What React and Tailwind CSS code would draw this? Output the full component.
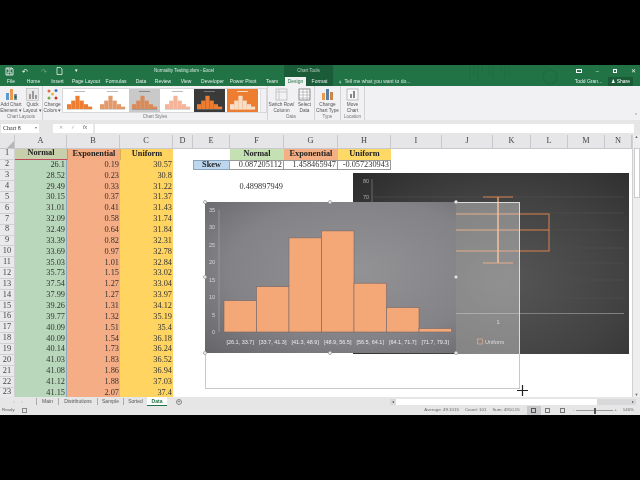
import React from 'react';

const normal = [26.1, 28.52, 29.49, 30.15, 31.01, 32.09, 32.49, 33.39, 33.69, 35.03, 35.73, 37.54, 37.99, 39.26, 39.77, 40.09, 40.09, 40.14, 41.03, 41.08, 41.12, 41.15];
const expo = [0.19, 0.23, 0.33, 0.37, 0.41, 0.58, 0.64, 0.82, 0.97, 1.01, 1.15, 1.27, 1.27, 1.31, 1.32, 1.51, 1.54, 1.73, 1.83, 1.86, 1.88, 2.07];
const uniform = [30.57, 30.8, 31.22, 31.37, 31.43, 31.74, 31.84, 32.31, 32.78, 32.84, 33.02, 33.04, 33.97, 34.12, 35.19, 35.4, 36.18, 36.24, 36.52, 36.94, 37.03, 37.4];

const colLetters = ['A', 'B', 'C', 'D', 'E', 'F', 'G', 'H', 'I', 'J', 'K', 'L', 'M', 'N'];

const tabs = [
  ['File', 'w-[22px]'],
  ['Home', 'w-[23px]'],
  ['Insert', 'w-[25px]'],
  ['Page Layout', 'w-[32px]'],
  ['Formulas', 'w-[28px]'],
  ['Data', 'w-[22px]'],
  ['Review', 'w-[22px]'],
  ['View', 'w-[24px]'],
  ['Developer', 'w-[29px]'],
  ['Power Pivot', 'w-[32px]'],
  ['Team', 'w-[26px]'],
];

const sheetTabs = [
  ['Main', 'w-[22px]'],
  ['Distributions', 'w-[39px]'],
  ['Sample', 'w-[26px]'],
  ['Sorted', 'w-[24px]'],
];

const bars = [9, 13, 27, 29, 14, 7, 1];
const binLabels = ['[26.1, 33.7]', '[33.7, 41.3]', '[41.3, 48.9]', '[48.9, 56.5]', '[56.5, 64.1]', '[64.1, 71.7]', '[71.7, 79.3]'];

const StyleThumb = ({ bg, bar, line = '#bbb' }) => (
  <svg width="31" height="23" viewBox="0 0 31 23" className="shrink-0">
    <rect width="31" height="23" fill={bg} />
    <rect x="10" y="2" width="11" height="1" fill={line} />
    {[4, 7, 11, 7, 4, 2].map((h, i) => (
      <rect key={i} x={3 + i * 4.2} y={20 - h * 1.2} width="4.2" height={h * 1.2} fill={bar} />
    ))}
    <rect x="3" y="20" width="25" height="0.6" fill={line} />
  </svg>
);

const RibbonBtn = ({ w, lines, children }) => (
  <div className={`${w} shrink-0 flex flex-col items-center text-[4.7px] leading-[6px] text-[#555]`}>
    <div className="h-[14px] mt-[1px] mb-[1px] flex items-center justify-center">{children}</div>
    {lines.map((l) => (
      <span key={l} className="whitespace-nowrap">{l}</span>
    ))}
  </div>
);

const RibbonGroup = ({ w, label, children }) => (
  <div className={`${w} h-full border-r border-[#d4d3d6] flex flex-col`}>
    <div className="flex-1 flex justify-center">{children}</div>
    <div className="text-center text-[4.5px] leading-[6px] text-[#777]">{label}</div>
  </div>
);

const Handle = ({ pos }) => (
  <div className={`absolute w-[4px] h-[4px] rounded-full bg-white border border-[#aaa] ${pos}`}></div>
);

const Cell = ({ className = '', children }) => (
  <div className={`h-full flex items-center justify-end pr-[1px] overflow-hidden whitespace-nowrap ${className}`}>
    {children}
  </div>
);

const HeadCell = ({ className = '', children }) => (
  <div className={`h-full flex items-center justify-center font-bold text-[#222] ${className}`}>{children}</div>
);

const Row = ({ n }) => {
  const i = n - 2;
  const num = (
    <div className="h-full bg-[#e9e9ec] border-r border-b border-[#d0d0d4] flex items-center justify-center text-[#444]">{n}</div>
  );
  if (n === 1) {
    return (
      <>
        {num}
        <HeadCell className="bg-[#c7d0ab] border-b border-[#c0485a]">Normal</HeadCell>
        <HeadCell className="bg-[#f4ab82] border-l border-[#c9926f]">Exponential</HeadCell>
        <HeadCell className="bg-[#ffd35f] border-l border-[#d9b04f]">Uniform</HeadCell>
        <div></div>
        <div></div>
        <HeadCell className="bg-[#c5e0b3]">Normal</HeadCell>
        <HeadCell className="bg-[#f4b084]">Exponential</HeadCell>
        <HeadCell className="bg-[#ffd966]">Uniform</HeadCell>
      </>
    );
  }
  return (
    <>
      {num}
      <Cell className="bg-[#b9d7ba] border-r border-[#8fa9c4]">{normal[i]}</Cell>
      <Cell className="bg-[#f4ad84]">{expo[i]}</Cell>
      <Cell className="bg-[#ffd460]">{uniform[i]}</Cell>
      <div></div>
      {n === 2 ? (
        <>
          <div className="h-full bg-[#bdd7ee] border border-[#8aa4bd] flex items-center justify-center font-bold text-[#222]">Skew</div>
          <Cell className="border-y border-r border-[#999]">0.087205112</Cell>
          <Cell className="border-y border-r border-[#999]">1.458465947</Cell>
          <Cell className="border-y border-r border-[#999]">-0.057230943</Cell>
        </>
      ) : n === 4 ? (
        <>
          <div></div>
          <Cell>0.489897949</Cell>
        </>
      ) : null}
    </>
  );
};

const HistogramChart = () => (
  <svg width="251" height="151" viewBox="0 0 251 151" className="block">
    <line x1="14" y1="8" x2="14" y2="130" stroke="#a5a5a8" strokeWidth="0.7" />
    {[35, 30, 25, 20, 15, 10, 5, 0].map((v) => (
      <text key={v} x="10" y={130 - v * 3.486 + 2} textAnchor="end" fontSize="5.5" fill="#d5d5d5" fontFamily="Liberation Sans, sans-serif">{v}</text>
    ))}
    {bars.map((v, i) => (
      <rect key={i} x={19 + i * 32.5} y={130 - v * 3.486} width="32.5" height={v * 3.486} fill="#f4a878" stroke="#75686a" strokeWidth="0.6" />
    ))}
    {binLabels.map((l, i) => (
      <text key={l} x={35.2 + i * 32.5} y="142" textAnchor="middle" fontSize="5.5" fill="#ecebeb" fontFamily="Liberation Sans, sans-serif">{l}</text>
    ))}
  </svg>
);

const BoxChart = () => (
  <svg width="276" height="181" viewBox="0 0 276 181" className="block">
    <text x="16" y="10" textAnchor="end" fontSize="5.5" fill="#aaa" fontFamily="Liberation Sans, sans-serif">80</text>
    <text x="16" y="26" textAnchor="end" fontSize="5.5" fill="#aaa" fontFamily="Liberation Sans, sans-serif">70</text>
    <line x1="19" y1="6" x2="19" y2="30" stroke="#777" strokeWidth="0.8" />
    {[24, 40, 57, 75, 90, 107, 125].map((y) => (
      <line key={y} x1="20" y1={y} x2="271" y2={y} stroke="#505050" strokeWidth="0.6" />
    ))}
    <line x1="20" y1="140.5" x2="271" y2="140.5" stroke="#808080" strokeWidth="1" />
    <rect x="85" y="41" width="111" height="37" fill="none" stroke="#d9824e" strokeWidth="1" />
    <line x1="85" y1="57" x2="196" y2="57" stroke="#d9824e" strokeWidth="1" />
    <line x1="145" y1="24" x2="145" y2="90" stroke="#e89a68" strokeWidth="1.6" />
    <line x1="130" y1="24" x2="160" y2="24" stroke="#d9824e" strokeWidth="1" />
    <line x1="130" y1="90" x2="160" y2="90" stroke="#d9824e" strokeWidth="1" />
    <text x="145" y="151" textAnchor="middle" fontSize="5.5" fill="#ccc" fontFamily="Liberation Sans, sans-serif">1</text>
    <rect x="124.5" y="166" width="5" height="5" fill="none" stroke="#d9824e" strokeWidth="0.7" />
    <text x="132" y="171" fontSize="5.5" fill="#ccc" fontFamily="Liberation Sans, sans-serif">Uniform</text>
  </svg>
);

export default function App() {
  return (
    <div className="w-[640px] h-[480px] bg-black flex flex-col overflow-hidden font-['Liberation_Sans',sans-serif]">
      <div className="h-[65px] shrink-0"></div>

      <div className="h-[350px] shrink-0 flex flex-col bg-[#e6e6e6] blur-[0.4px]">
        {/* Title bar and tabs */}
        <div className="h-[21px] shrink-0 bg-[#217346] relative text-white">
          {/* faint circuit pattern behind the window buttons */}
          <svg width="130" height="21" viewBox="0 0 130 21" className="absolute left-[465px] top-0 opacity-20">
            <path d="M5 0v14M9 0v10M13 0v16M17 0v8M24 0v12M28 0v15M36 0v9M40 0v14M44 0v11" stroke="#0f5a32" strokeWidth="1.5" />
            <circle cx="85" cy="12" r="7" fill="none" stroke="#0f5a32" strokeWidth="2" />
          </svg>
          <div className="h-[12px] flex items-center text-[4.5px] relative">
            <svg width="9" height="9" viewBox="0 0 9 9" className="ml-[5px]">
              <path d="M1 1h6l1 1v6H1z M3 1v2h3V1 M3 8V5h3v3" fill="none" stroke="#fff" strokeWidth="0.8" />
            </svg>
            <span className="ml-[8px] text-[7px] leading-none">↶</span>
            <span className="ml-[13px] text-[7px] leading-none text-[#6fa58a]">↷</span>
            <svg width="7" height="8" viewBox="0 0 7 8" className="ml-[9px]">
              <path d="M1 .5h3.5L6 2v5.5H1z" fill="none" stroke="#fff" strokeWidth="0.7" />
            </svg>
            <span className="ml-[12px] text-[5px]">▾</span>
            <span className="ml-[76px] w-[60px] text-center whitespace-nowrap text-[#d8e8df]">Normality Testing.xlsm - Excel</span>
            <div className="absolute left-[284px] top-0 w-[49px] h-[12px] bg-[#1b5c38] flex items-center justify-center text-[#b9cfc3]">Chart Tools</div>
            <div className="ml-auto mr-[4px] flex items-center gap-[14px] text-[6px] text-[#e6f0ea]">
              <span className="w-[6px] h-[4px] border border-white"></span>
              <span>–</span>
              <span className="w-[4px] h-[4px] border border-white"></span>
              <span>✕</span>
            </div>
          </div>
          <div className="h-[9px] flex items-center text-[5px] leading-none relative">
            {tabs.map(([label, w]) => (
              <div key={label} className={`${w} text-center whitespace-nowrap text-[#e4efe9]`}>{label}</div>
            ))}
            <div className="w-[21px] h-full bg-[#f1f0f2] text-[#217346] flex items-center justify-center">Design</div>
            <div className="w-[27px] h-full bg-[#1b5c38] flex items-center justify-center text-[#e4efe9]">Format</div>
            <span className="ml-[5px] text-[6px]">♀</span>
            <span className="ml-[2px] whitespace-nowrap text-[#d8e8df]">Tell me what you want to do...</span>
            <span className="ml-auto whitespace-nowrap text-[#e4efe9]">Todd Gran...</span>
            <span className="ml-[6px] mr-[7px] px-[3px] h-full flex items-center bg-[#1b5c38] whitespace-nowrap">♟ Share</span>
          </div>
        </div>

        {/* Ribbon */}
        <div className="h-[34px] shrink-0 bg-[#f1f0f2] flex">
          <RibbonGroup w="w-[43px]" label="Chart Layouts">
            <RibbonBtn w="w-[23px]" lines={['Add Chart', 'Element ▾']}>
              <svg width="13" height="13" viewBox="0 0 13 13">
                <rect x="1" y="5" width="3" height="7" fill="#5b9bd5" />
                <rect x="5" y="1" width="3" height="11" fill="#ed9a4a" />
                <rect x="9" y="6" width="3" height="6" fill="#7f8ea3" />
                <path d="M9 9h3M10.500 7.500v3" stroke="#217346" strokeWidth="1" />
              </svg>
            </RibbonBtn>
            <RibbonBtn w="w-[20px]" lines={['Quick', 'Layout ▾']}>
              <svg width="13" height="13" viewBox="0 0 13 13">
                <rect x="0.500" y="0.500" width="12" height="12" fill="#e8e8ea" stroke="#aaa" strokeWidth="0.5" />
                <rect x="3" y="6" width="2" height="5" fill="#999" />
                <rect x="6" y="3" width="2" height="8" fill="#999" />
                <rect x="9" y="7" width="2" height="4" fill="#999" />
              </svg>
            </RibbonBtn>
          </RibbonGroup>
          <RibbonGroup w="w-[225px]" label="Chart Styles">
            <div className="flex w-full">
              <RibbonBtn w="w-[19px]" lines={['Change', 'Colors ▾']}>
                <svg width="13" height="13" viewBox="0 0 13 13">
                  <circle cx="3" cy="3" r="1.500" fill="#e66b3a" />
                  <circle cx="10" cy="2.500" r="1.500" fill="#4472c4" />
                  <circle cx="6.500" cy="6" r="1.500" fill="#f2b233" />
                  <circle cx="3" cy="10" r="1.500" fill="#70ad47" />
                  <circle cx="10" cy="10" r="1.500" fill="#c0392b" />
                </svg>
              </RibbonBtn>
              <div className="w-[205px] h-[25px] mt-[2px] bg-white border border-[#d8d8da] flex items-center gap-[1.5px] pl-[1px]">
                <StyleThumb bg="#ffffff" bar="#ed7d31" />
                <StyleThumb bg="#ffffff" bar="#e39a6b" />
                <StyleThumb bg="#c9c9c9" bar="#d98a58" line="#888" />
                <StyleThumb bg="#ffffff" bar="#f5b49a" />
                <StyleThumb bg="#3a3a3a" bar="#ed7d31" line="#777" />
                <StyleThumb bg="#ed7d31" bar="#f6dfc9" line="#f6dfc9" />
                <div className="ml-auto w-[6px] h-full bg-[#f1f0f2] border-l border-[#ddd]"></div>
              </div>
            </div>
          </RibbonGroup>
          <RibbonGroup w="w-[47px]" label="Data">
            <RibbonBtn w="w-[27px]" lines={['Switch Row/', 'Column']}>
              <svg width="13" height="13" viewBox="0 0 13 13">
                <rect x="1" y="1" width="11" height="11" fill="#f1f0f2" stroke="#bbb" strokeWidth="0.8" />
                <path d="M1 4h11M4 1v11" stroke="#bbb" strokeWidth="0.7" />
              </svg>
            </RibbonBtn>
            <RibbonBtn w="w-[19px]" lines={['Select', 'Data']}>
              <svg width="13" height="13" viewBox="0 0 13 13">
                <rect x="1" y="1" width="11" height="11" fill="#fff" stroke="#777" strokeWidth="0.8" />
                <path d="M1 4h11M1 7h11M1 10h11M5 1v11M9 1v11" stroke="#888" strokeWidth="0.5" />
              </svg>
            </RibbonBtn>
          </RibbonGroup>
          <RibbonGroup w="w-[26px]" label="Type">
            <RibbonBtn w="w-[25px]" lines={['Change', 'Chart Type']}>
              <svg width="13" height="13" viewBox="0 0 13 13">
                <rect x="1" y="5" width="3" height="7" fill="#ed9a4a" />
                <rect x="5" y="1" width="3" height="11" fill="#5b7fa5" />
                <rect x="9" y="4" width="3" height="8" fill="#c8864a" />
              </svg>
            </RibbonBtn>
          </RibbonGroup>
          <RibbonGroup w="w-[24px]" label="Location">
            <RibbonBtn w="w-[23px]" lines={['Move', 'Chart']}>
              <svg width="13" height="13" viewBox="0 0 13 13">
                <rect x="1" y="1" width="11" height="11" fill="#f7f7f7" stroke="#999" strokeWidth="0.6" />
                <rect x="4" y="6" width="2" height="4" fill="#888" />
                <rect x="7" y="3" width="2" height="7" fill="#888" />
              </svg>
            </RibbonBtn>
          </RibbonGroup>
          <div className="flex-1 flex items-end justify-end pr-[2px] pb-[1px] text-[5px] text-[#777]">⌃</div>
        </div>

        {/* Formula bar */}
        <div className="h-[15px] shrink-0 flex items-center gap-[2px] pt-[1px] bg-[#e6e6e6]">
          <div className="ml-[1px] w-[38px] h-[9px] bg-white flex items-center justify-between px-[2px] text-[6px] font-['Liberation_Serif',serif] text-[#333]">
            <span>Chart 8</span>
            <span className="text-[4px] text-[#777]">▾</span>
          </div>
          <div className="ml-[12px] w-[40px] h-[9px] bg-white flex items-center gap-[8px] pl-[6px] text-[5px] text-[#aaa]">
            <span>✕</span>
            <span>✓</span>
            <span className="italic text-[#555]">fx</span>
          </div>
          <div className="w-[539px] h-[9px] bg-white"></div>
        </div>

        {/* Sheet */}
        <div className="h-[262px] shrink-0 bg-white relative overflow-hidden font-['Liberation_Serif',serif] text-[8.3px] text-[#333] leading-none flex">
          <div className="w-[632px] grid grid-cols-[15px_52px_53px_53px_20px_37px_54px_54px_53px_51px_51px_38px_37px_37px_27px] grid-rows-[13.7px_repeat(23,10.86px)] content-start">
            <div className="h-full bg-[#e6e6e8] border-r border-b border-[#c8c8cc] flex items-end justify-end">
              <div className="w-0 h-0 border-l-[7px] border-l-transparent border-b-[7px] border-b-[#b5b5b8]"></div>
            </div>
            {colLetters.map((c) => (
              <div key={c} className="h-full bg-[#e6e6e8] border-r border-b border-[#c8c8cc] flex items-center justify-center text-[#444]">{c}</div>
            ))}
            {Array.from({ length: 23 }, (_, i) => (
              <React.Fragment key={i}>
                <Row n={i + 1} />
                {Array.from({ length: i === 0 || i === 1 ? 6 : i === 3 ? 8 : 10 }, (_, k) => <div key={k}></div>)}
              </React.Fragment>
            ))}
          </div>

          {/* Vertical scrollbar */}
          <div className="w-[8px] bg-[#eeeeef] border-l border-[#d0d0d3] flex flex-col items-center">
            <span className="h-[13px] text-[4px] text-[#666]">▲</span>
            <div className="w-[6px] h-[50px] bg-white border border-[#ccc]"></div>
            <span className="mt-auto text-[4px] text-[#666]">▼</span>
          </div>

          {/* Charts float over the grid */}
          <div className="absolute left-[353px] top-[38px] w-[276px] h-[181px] bg-[radial-gradient(ellipse_at_55%_60%,#565656_0%,#424242_55%,#2b2b2b_100%)]">
            <BoxChart />
          </div>
          <div className="absolute left-[205px] top-[67px] w-[315px] h-[187px] border border-[#c9c9cc]"></div>
          <div className="absolute left-[456px] top-[67px] w-[64px] h-[152px] bg-white/35"></div>
          <div className="absolute left-[205px] top-[67px] w-[251px] h-[151px] bg-[radial-gradient(ellipse_at_60%_45%,#939295_0%,#838286_60%,#656468_100%)]">
            <HistogramChart />
          </div>
          <Handle pos="left-[203px] top-[65px]" />
          <Handle pos="left-[328px] top-[65px]" />
          <Handle pos="left-[454px] top-[65px]" />
          <Handle pos="left-[203px] top-[140px]" />
          <Handle pos="left-[454px] top-[140px]" />
          <Handle pos="left-[203px] top-[216px]" />
          <Handle pos="left-[328px] top-[216px]" />
          <Handle pos="left-[454px] top-[216px]" />
          <svg width="11" height="11" viewBox="0 0 11 11" className="absolute left-[517px] top-[250px]">
            <path d="M5.500 0v11M0 5.500h11" stroke="#222" strokeWidth="1.2" />
          </svg>
        </div>

        {/* Sheet tabs */}
        <div className="h-[9px] shrink-0 bg-[#e6e6e6] flex items-center text-[5px] leading-none text-[#555] relative">
          <div className="w-[36px] h-full flex items-center justify-center gap-[6px] text-[#bbb]">
            <span>‹</span>
            <span>›</span>
          </div>
          {sheetTabs.map(([label, w]) => (
            <div key={label} className={`${w} h-[7px] border-l border-[#aaa] flex items-center justify-center whitespace-nowrap`}>{label}</div>
          ))}
          <div className="w-[20px] h-full bg-white border-b border-[#217346] font-bold text-[#217346] flex items-center justify-center">Data</div>
          <div className="ml-[9px] w-[6px] h-[6px] rounded-full border border-[#888] flex items-center justify-center text-[5px]">+</div>
          <div className="ml-auto mr-[4px] w-[246px] h-[6px] bg-[#d9d9db] flex items-center">
            <span className="w-[6px] text-center text-[4px]">◂</span>
            <div className="w-[201px] h-full bg-white"></div>
            <span className="ml-auto w-[6px] text-center text-[4px]">▸</span>
          </div>
        </div>

        {/* Status bar */}
        <div className="h-[9px] shrink-0 bg-[#e6e6e6] flex items-center text-[4.4px] leading-none text-[#666] pl-[2px]">
          <span>Ready</span>
          <span className="ml-[7px] w-[5px] h-[5px] border border-[#888]"></span>
          <span className="ml-auto whitespace-nowrap">Average: 49.1015</span>
          <span className="ml-[6px] whitespace-nowrap">Count: 101</span>
          <span className="ml-[6px] whitespace-nowrap">Sum: 4910.15</span>
          <div className="ml-[7px] w-[14px] h-full bg-[#c9c9cb] flex items-center justify-center">
            <span className="w-[5px] h-[5px] border border-[#555]"></span>
          </div>
          <div className="w-[14px] h-full flex items-center justify-center">
            <span className="w-[5px] h-[5px] border border-[#777]"></span>
          </div>
          <div className="ml-[1px] w-[14px] h-full flex items-center justify-center">
            <span className="w-[5px] h-[5px] border border-[#777]"></span>
          </div>
          <span className="ml-[3px]">-</span>
          <div className="ml-[2px] w-[37px] h-[1px] bg-[#999] flex items-center justify-center">
            <span className="w-[2px] h-[6px] bg-[#555]"></span>
          </div>
          <span className="ml-[1px]">+</span>
          <span className="ml-[6px] mr-[6px]">140%</span>
        </div>
      </div>

      <div className="flex-1"></div>
    </div>
  );
}
